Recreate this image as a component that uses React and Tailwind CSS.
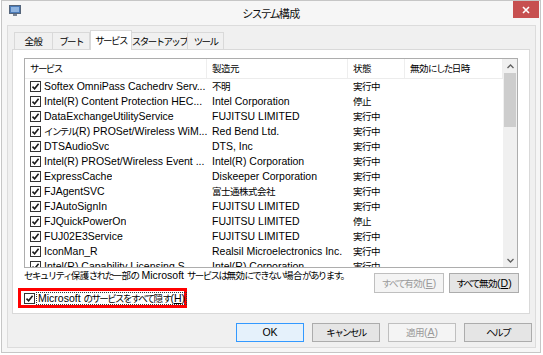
import React from "react";

const rows = [
  ["Softex OmniPass Cachedrv Serv...", "不明", "実行中"],
  ["Intel(R) Content Protection HEC...", "Intel Corporation", "停止"],
  ["DataExchangeUtilityService", "FUJITSU LIMITED", "実行中"],
  ["インテル(R) PROSet/Wireless WiM...", "Red Bend Ltd.", "実行中"],
  ["DTSAudioSvc", "DTS, Inc", "実行中"],
  ["Intel(R) PROSet/Wireless Event ...", "Intel(R) Corporation", "実行中"],
  ["ExpressCache", "Diskeeper Corporation", "実行中"],
  ["FJAgentSVC", "富士通株式会社", "実行中"],
  ["FJAutoSignIn", "FUJITSU LIMITED", "実行中"],
  ["FJQuickPowerOn", "FUJITSU LIMITED", "停止"],
  ["FUJ02E3Service", "FUJITSU LIMITED", "実行中"],
  ["IconMan_R", "Realsil Microelectronics Inc.", "実行中"],
  ["Intel(R) Capability Licensing S...", "Intel(R) Corporation", "実行中"],
];

const KANA = /[\u3000-\u30ff\uff00-\uffef]/;
const KANJI = /[\u3400-\u9fff]/;

function kind(c) {
  if (KANA.test(c)) return 1;
  if (KANJI.test(c)) return 2;
  return 0;
}

// Split a string into Latin / kana / kanji runs, sized like Meiryo UI
function J(s) {
  const out = [];
  let cur = "";
  let k = -1;
  const flush = () => {
    if (!cur) return;
    const key = out.length;
    if (k === 1) out.push(<span key={key} className="text-[9.5px] tracking-[-1.6px]">{cur}</span>);
    else if (k === 2) out.push(<span key={key} className="text-[9.5px] tracking-[-0.5px]">{cur}</span>);
    else out.push(<span key={key}>{cur}</span>);
    cur = "";
  };
  for (const c of s) {
    const kk = kind(c);
    if (kk !== k) {
      flush();
      k = kk;
    }
    cur += c;
  }
  flush();
  return out;
}

function Check() {
  return (
    <span className="flex items-center justify-center w-[11px] h-[11px] border border-[#333333] bg-white shrink-0">
      <svg width="9" height="9" viewBox="0 0 9 9">
        <path d="M1.5 4.6 L3.6 6.7 L7.6 1.8" fill="none" stroke="#1a1a1a" strokeWidth="1.6" />
      </svg>
    </span>
  );
}

function Tab({ label, selected, w }) {
  if (selected) {
    return (
      <div
        className="relative z-10 -mb-[1px] h-[20px] shrink-0 bg-white border border-b-0 border-[#d9d9d9] flex items-start justify-center pt-[3px] whitespace-nowrap"
        style={{ width: w }}
      >
        {J(label)}
      </div>
    );
  }
  return (
    <div
      className="h-[17px] shrink-0 bg-[#f0f0f0] border border-b-0 border-[#d9d9d9] -ml-[1px] first:ml-0 flex items-start justify-center pt-[2px] whitespace-nowrap"
      style={{ width: w }}
    >
      {J(label)}
    </div>
  );
}

export default function App() {
  return (
    <div className="w-[543px] h-[355px] bg-white overflow-hidden text-black text-[10.5px] leading-[13px] font-['Liberation_Sans','Noto_Sans_CJK_JP',sans-serif]">
      <div className="ml-[1px] w-[540px] h-[353px] border border-[#c6c6c6] bg-[#f6f6f6] flex flex-col">
        {/* title bar */}
        <div className="h-[24px] shrink-0 grid grid-cols-[1fr_auto_1fr] items-start">
          <div className="pl-[7px] pt-[4px]">
            <svg width="12" height="11" viewBox="0 0 12 11">
              <rect x="0.5" y="0.5" width="11" height="8" fill="#4a7ab8" stroke="#55657a" />
              <rect x="2" y="2" width="8" height="5" fill="#8fb4e0" />
              <rect x="4" y="9" width="4" height="2" fill="#7a8494" />
            </svg>
          </div>
          <div className="pt-[6px] leading-[14px] text-[#111] whitespace-nowrap">
            <span className="text-[11px] tracking-[-1.8px]">システム</span>
            <span className="text-[11px] tracking-[-0.5px]">構成</span>
          </div>
          <div className="flex justify-end pr-[1px]">
            <div className="w-[26px] h-[17px] bg-[#c75050] flex items-center justify-center">
              <svg width="8" height="8" viewBox="0 0 8 8">
                <path d="M1 1 L7 7 M7 1 L1 7" stroke="#ffffff" strokeWidth="1.6" />
              </svg>
            </div>
          </div>
        </div>

        {/* client area */}
        <div className="ml-[5px] w-[529px] h-[323px] shrink-0 border border-[#dcdcdc] bg-[#f0f0f0] flex flex-col">
          {/* tabs */}
          <div className="mt-[4px] ml-[6px] h-[19px] shrink-0 flex items-end">
            <Tab label="全般" w={39} />
            <Tab label="ブート" w={38} />
            <Tab label="サービス" selected w={42} />
            <Tab label="スタートアップ" w={57} />
            <Tab label="ツール" w={37} />
          </div>

          {/* panel */}
          <div className="ml-[4px] w-[518px] h-[265px] shrink-0 border border-[#d9d9d9] bg-white flex flex-col">
            {/* list box */}
            <div className="mt-[8px] ml-[11px] w-[494px] h-[210px] shrink-0 border border-[#adadad] bg-white flex overflow-hidden">
              <div className="flex-1 flex flex-col overflow-hidden">
                <div className="h-[20px] shrink-0 flex items-center border-b border-[#ececec]">
                  <div className="w-[182px] pl-[5px] h-full flex items-center border-r border-[#eeeeee]">{J("サービス")}</div>
                  <div className="w-[141px] pl-[5px] h-full flex items-center border-r border-[#eeeeee]">{J("製造元")}</div>
                  <div className="w-[57px] pl-[5px] h-full flex items-center border-r border-[#eeeeee]">{J("状態")}</div>
                  <div className="flex-1 pl-[5px] h-full flex items-center border-r border-[#eeeeee]">{J("無効にした日時")}</div>
                </div>
                {rows.map((r, i) => (
                  <div key={i} className="h-[15px] shrink-0 flex items-center whitespace-nowrap">
                    <div className="w-[182px] shrink-0 pl-[5px] flex items-center gap-[2px]">
                      <Check />
                      <span className="ml-[1px] overflow-hidden">{J(r[0])}</span>
                    </div>
                    <div className="w-[141px] shrink-0 pl-[5px] overflow-hidden">{J(r[1])}</div>
                    <div className="w-[57px] shrink-0 pl-[5px]">{J(r[2])}</div>
                    <div className="flex-1" />
                  </div>
                ))}
              </div>
              {/* scrollbar */}
              <div className="w-[14px] shrink-0 bg-[#f0f0f0] flex flex-col">
                <div className="h-[14px] flex items-center justify-center">
                  <svg width="7" height="5" viewBox="0 0 7 5">
                    <path d="M0.5 4 L3.5 1 L6.5 4" fill="none" stroke="#606060" strokeWidth="1.3" />
                  </svg>
                </div>
                <div className="mx-[1px] h-[54px] bg-[#cdcdcd]" />
                <div className="flex-1" />
                <div className="h-[14px] flex items-center justify-center">
                  <svg width="7" height="5" viewBox="0 0 7 5">
                    <path d="M0.5 1 L3.5 4 L6.5 1" fill="none" stroke="#606060" strokeWidth="1.3" />
                  </svg>
                </div>
              </div>
            </div>

            {/* bottom area of panel */}
            <div className="flex">
              <div className="flex flex-col">
                <div className="ml-[11px] mt-[1px] h-[13px] whitespace-nowrap">
                  {J("セキュリティ保護された一部の Microsoft サービスは無効にできない場合があります。")}
                </div>
                <div className="ml-[5px] mt-[6px] w-[169px] h-[20px] border-[3px] border-[#ff0000] bg-white flex items-center">
                  <div className="ml-[3px]">
                    <Check />
                  </div>
                  <span className="ml-[1px] border border-dotted border-[#333] px-[1px] leading-[11px] whitespace-nowrap">
                    {J("Microsoft のサービスをすべて隠す(")}
                    <span className="underline">H</span>)
                  </span>
                </div>
              </div>
              <div className="ml-auto mt-[5px] mr-[10px] flex gap-[5px] shrink-0">
                <div className="w-[70px] h-[20px] border border-[#bfbfbf] bg-[#f4f4f4] text-[#9a9a9a] flex items-center justify-center whitespace-nowrap">
                  {J("すべて有効(")}
                  <span className="underline">E</span>)
                </div>
                <div className="w-[70px] h-[20px] border border-[#acacac] bg-[#e5e5e5] flex items-center justify-center whitespace-nowrap">
                  {J("すべて無効(")}
                  <span className="underline">D</span>)
                </div>
              </div>
            </div>
          </div>

          {/* dialog buttons */}
          <div className="mt-[9px] mr-[3px] flex justify-end gap-[8px]">
            <div className="w-[68px] h-[19px] border border-[#3399ff] bg-[#e5f1fb] flex items-center justify-center">OK</div>
            <div className="w-[68px] h-[19px] border border-[#acacac] bg-[#e5e5e5] flex items-center justify-center">{J("キャンセル")}</div>
            <div className="w-[68px] h-[19px] border border-[#bfbfbf] bg-[#f4f4f4] text-[#9a9a9a] flex items-center justify-center whitespace-nowrap">
              {J("適用(")}
              <span className="underline">A</span>)
            </div>
            <div className="w-[68px] h-[19px] border border-[#acacac] bg-[#e5e5e5] flex items-center justify-center">{J("ヘルプ")}</div>
          </div>
        </div>
      </div>
    </div>
  );
}
